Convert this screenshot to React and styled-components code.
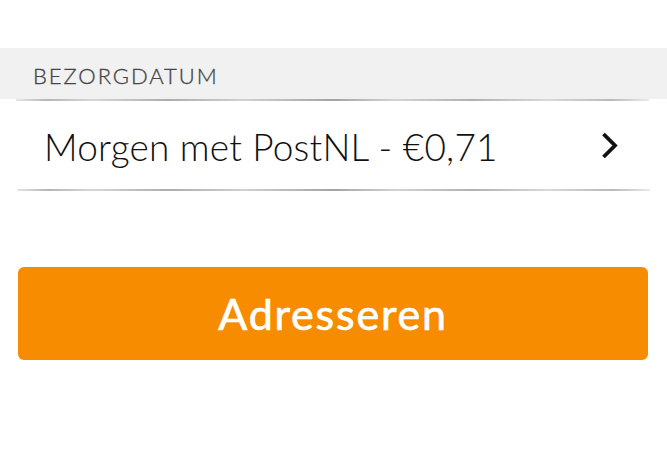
import React from 'react';
import styled, { createGlobalStyle } from 'styled-components';

const GlobalStyle = createGlobalStyle`
    html, body {
        margin: 0;
        padding: 0;
        background: #ffffff;
    }
    body {
        font-family: Lato, "Open Sans", sans-serif;
    }
`

const Page = styled.div`
    width: 667px;
    height: 464px;
    padding-top: 48px;
    box-sizing: border-box;
    display: flex;
    flex-direction: column;
`

const SectionHeader = styled.div`
    height: 51px;
    background-color: #f0f1f0;
    display: flex;
    align-items: center;
    padding-left: 33px;
    padding-top: 4px;
    box-sizing: border-box;
`

const SectionLabel = styled.div`
    font-size: 22px;
    font-weight: 300;
    color: #444444;
    letter-spacing: 1.95px;
    -webkit-text-stroke: 0.3px #444444;
`

// ruwe, geborstelde scheidingslijn
const Rough = styled.div`
    height: 2px;
    margin: 0 ${p => p.$right}px 0 ${p => p.$left}px;
    background: linear-gradient(90deg,
        rgba(170,170,170,0.3) 0%,
        rgba(150,150,150,0.7) 5%,
        rgba(175,175,175,0.5) 12%,
        rgba(145,145,145,0.75) 24%,
        rgba(170,170,170,0.55) 36%,
        rgba(140,140,140,0.8) 50%,
        rgba(175,175,175,0.55) 60%,
        rgba(150,150,150,0.75) 72%,
        rgba(180,180,180,0.5) 84%,
        rgba(155,155,155,0.7) 94%,
        rgba(185,185,185,0.3) 100%);
`

const OptionRow = styled.div`
    height: 88px;
    display: flex;
    align-items: center;
    justify-content: space-between;
    padding: 0 49px 0 44px;
    cursor: pointer;
`

const OptionText = styled.div`
    font-size: 37px;
    font-weight: 300;
    color: #111111;
    letter-spacing: 0.2px;
    padding-top: 2px;
`

const Chevron = styled.svg`
    width: 17px;
    height: 27px;
`

const Spacer = styled.div`
    height: 76px;
`

const Button = styled.button`
    margin: 0 19px 0 18px;
    height: 93px;
    border: none;
    border-radius: 6px;
    background-color: #f88c00;
    color: #ffffff;
    font-family: Lato, "Open Sans", sans-serif;
    font-size: 43px;
    font-weight: 400;
    letter-spacing: 1.8px;
    -webkit-text-stroke: 0.7px #ffffff;
    cursor: pointer;
    padding: 0;
`

function App() {
    return (
        <>
            <GlobalStyle />
            <Page>
                <SectionHeader>
                    <SectionLabel>BEZORGDATUM</SectionLabel>
                </SectionHeader>
                <Rough $left={16} $right={18} />
                <OptionRow>
                    <OptionText>Morgen met PostNL - €0,71</OptionText>
                    <Chevron viewBox="0 0 17 27">
                        <path d="M2.5 2 L14 13.5 L2.5 25" fill="none" stroke="#111" strokeWidth="3.8" strokeLinejoin="miter" />
                    </Chevron>
                </OptionRow>
                <Rough $left={17} $right={17} />
                <Spacer />
                <Button>Adresseren</Button>
            </Page>
        </>
    );
}

export default App;
